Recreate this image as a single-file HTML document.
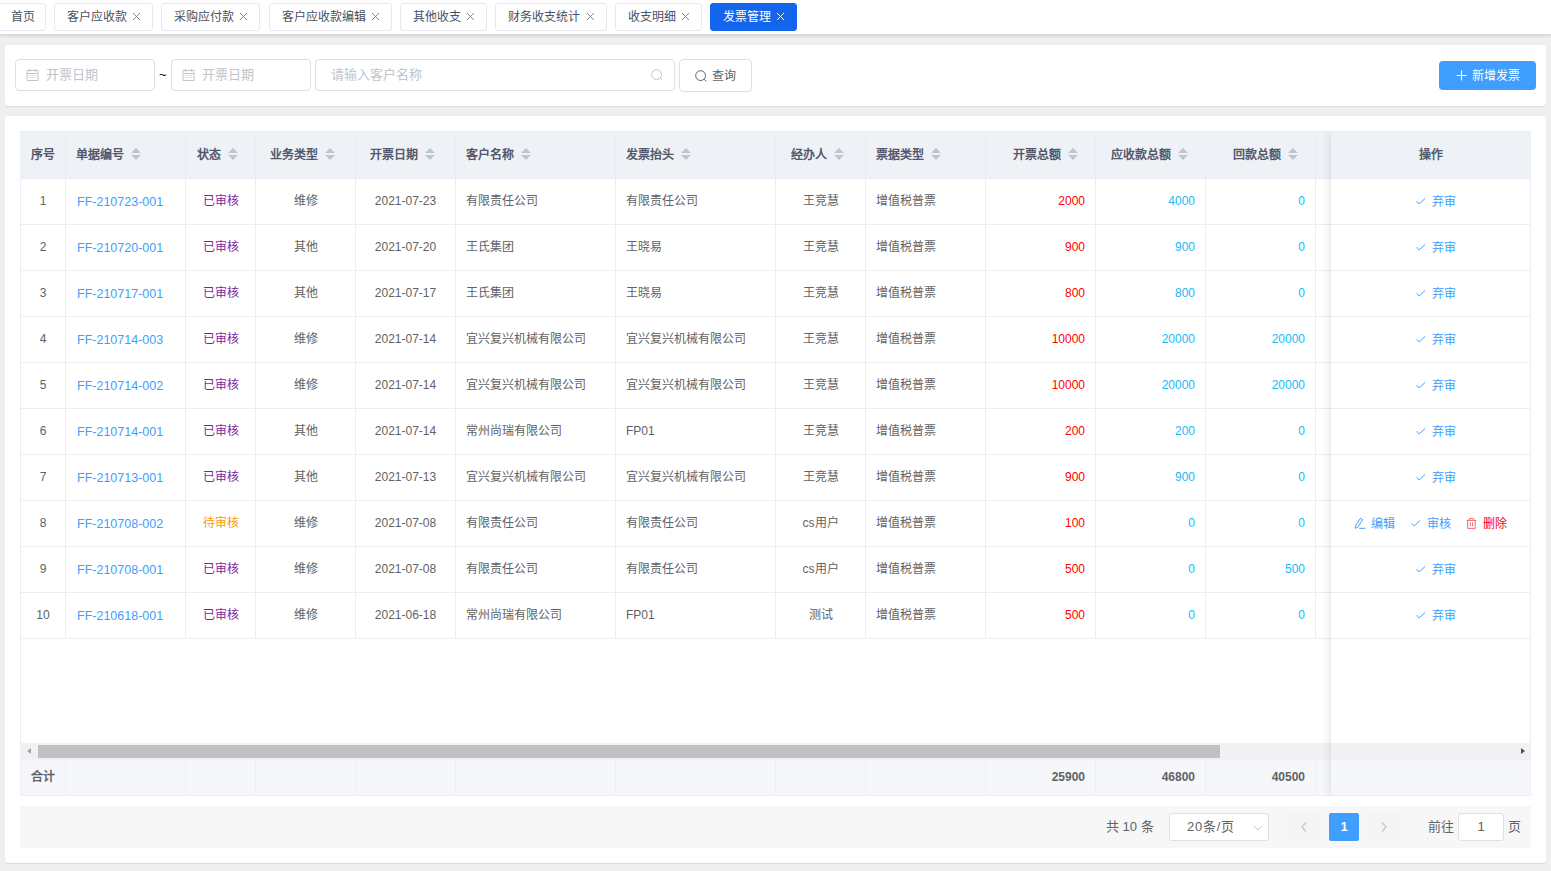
<!DOCTYPE html>
<html lang="zh-CN">
<head>
<meta charset="utf-8">
<title>发票管理</title>
<style>
*{box-sizing:border-box;margin:0;padding:0}
html,body{width:1551px;height:871px;overflow:hidden}
body{background:#efefef;font-family:"Liberation Sans",sans-serif;font-size:12px;color:#606266;position:relative}
svg{display:block}
/* ---------- tags bar ---------- */
#tags{position:absolute;left:0;top:0;width:1551px;height:35px;background:#fff;border-bottom:1px solid #d8dce5;box-shadow:0 1px 3px 0 rgba(0,0,0,.12),0 0 3px 0 rgba(0,0,0,.04)}
.tag{position:absolute;top:3px;height:28px;border:1px solid #e6e8ec;border-radius:3px;background:#fff;color:#495060;font-size:12px;line-height:26px;white-space:nowrap;padding-left:12px}
.tag .x{position:absolute;right:11px;top:8px;width:9px;height:9px}
.tag .x svg{width:9px;height:9px;stroke:#6e7488;stroke-width:.85;fill:none}
.tag.on{background:#1366ec;border-color:#1366ec;color:#fff}
.tag.on .x svg{stroke:#fff;stroke-width:1}
/* ---------- cards ---------- */
.card{position:absolute;left:5px;width:1541px;background:#fff;border-radius:3px;box-shadow:0 1px 0 #dcdcdc}
#c1{top:45px;height:61px}
#c2{top:116px;height:747px}
.inp{position:absolute;top:14px;height:32px;border:1px solid #dcdfe6;border-radius:4px;background:#fff;color:#c0c4cc;font-size:13px;line-height:30px}
.btn{position:absolute;border-radius:4px;font-size:12px;white-space:nowrap}
.cal{position:absolute;left:10px;top:9px;width:13px;height:12px;stroke:#c0c4cc;stroke-width:1;fill:none}
.cal .dt{stroke:#d3d6dc}
.sch{position:absolute;width:12px;height:12px;stroke-width:1;fill:none}
/* ---------- table ---------- */
#tb{position:absolute;left:15px;top:15px;width:1511px;height:665px;overflow:hidden;border-left:1px solid #ebeef5;background:#fff;font-size:12px;color:#606266}
.hr{display:flex;height:48px;background:#eef1f6;border-top:1px solid #e9ecf4;border-bottom:1px solid #ebeef5;width:1600px}
.hc{flex:none;height:46px;line-height:46px;padding:0 10px;border-right:1px solid #e9ecf3;font-weight:bold;color:#53586a;white-space:nowrap;overflow:hidden}
.hc span{display:inline-block;vertical-align:middle;line-height:23px;position:relative;top:0;white-space:nowrap;overflow:hidden;text-align:left}
.sc{display:inline-block;position:relative;top:-1px;width:24px;height:34px;vertical-align:middle}
.sc b{position:absolute;left:7px;width:0;height:0;border:5px solid transparent}
.sc .u{top:5px;border-bottom-color:#c0c4cc}
.sc .d{bottom:7px;border-top-color:#c0c4cc}
.c{text-align:center}.l{text-align:left}.r{text-align:right}
.tr{display:flex;height:46px;border-bottom:1px solid #ebeef5;width:1600px}
.td{flex:none;height:45px;line-height:45px;padding:0 10px;border-right:1px solid #ebeef5;white-space:nowrap;overflow:hidden}
.lk{color:#409eff;font-size:12.5px;padding-left:11px;line-height:46px}
.st{color:#7b1fa2}.sw{color:#f59e0b}
.rd{color:#ff0000}.cy{color:#14bcf3}
.fr{position:absolute;left:0;top:628px;border-top:1px solid #ebeef5;display:flex;height:37px;width:1600px;background:#f5f7fa;border-bottom:1px solid #ebeef5}
.fd{flex:none;height:35px;line-height:34px;padding:0 10px;border-right:1px solid #ebeef5;font-weight:bold;color:#606266;white-space:nowrap}
#sb{position:absolute;left:0;top:612px;width:1510px;height:17px;background:#f1f1f1}
#sb .la{position:absolute;left:5.8px;top:4.8px;width:0;height:0;border:3.7px solid transparent;border-left-width:0;border-right:4.3px solid #a3a3a3}
#sb .th{position:absolute;left:17px;top:2px;width:1182px;height:13px;background:#c1c1c1}
#fx{position:absolute;left:1310px;top:0;width:200px;height:665px;background:#fff;box-shadow:0 0 10px rgba(0,0,0,.12);border-right:1px solid #ebeef5}
.fh{height:48px;line-height:46px;background:#eef1f6;border-top:1px solid #e9ecf4;border-bottom:1px solid #ebeef5;text-align:center;font-weight:bold;color:#515a6e}
.fa{position:relative;height:46px;border-bottom:1px solid #ebeef5;color:#409eff}
.ab{position:absolute;top:0;line-height:47px;padding-left:17px;white-space:nowrap}
.ic{position:absolute;left:0;top:17px;width:12px;height:12px;fill:none;stroke:currentColor;stroke-width:1}
.ic.up{top:16px}
.del{color:#f56c6c}.del em{font-style:normal;color:#ff0000}
.fsb{position:absolute;left:0;top:612px;width:199px;height:17px;background:#f1f1f1}
.fsb .ra{position:absolute;left:190px;top:5.2px;width:0;height:0;border:3.7px solid transparent;border-right-width:0;border-left:4.3px solid #505050}
.ff{position:absolute;left:0;top:628px;width:199px;height:37px;background:#f5f7fa;border-top:1px solid #ebeef5;border-bottom:1px solid #ebeef5}
/* ---------- pagination ---------- */
#pg{position:absolute;left:15px;top:690px;width:1511px;height:42px;background:#f7f7f7;font-size:13px;color:#606266}
.pt{position:absolute;top:7px;line-height:28px;white-space:nowrap}
.psel{position:absolute;top:7px;height:28px;line-height:26px;border:1px solid #dcdfe6;border-radius:3px;background:#fff;color:#606266}
.pb{position:absolute;top:7px;width:30px;height:28px;line-height:28px;border-radius:2px;background:#f4f4f5;text-align:center;font-weight:bold;color:#606266}
.pb svg{position:absolute;left:11px;top:8px;width:8px;height:12px;fill:none;stroke:#c0c4cc;stroke-width:1.2}
.pb.on{background:#409eff;color:#fff}
</style>
</head>
<body>
<div id="tags">
  <div class="tag" style="left:-6px;width:52px;padding-left:16px">首页</div>
  <div class="tag" style="left:54px;width:99px">客户应收款<span class="x"><svg viewBox="0 0 9 9"><path d="M1 1L8 8M8 1L1 8"/></svg></span></div>
  <div class="tag" style="left:161px;width:99px">采购应付款<span class="x"><svg viewBox="0 0 9 9"><path d="M1 1L8 8M8 1L1 8"/></svg></span></div>
  <div class="tag" style="left:269px;width:123px">客户应收款编辑<span class="x"><svg viewBox="0 0 9 9"><path d="M1 1L8 8M8 1L1 8"/></svg></span></div>
  <div class="tag" style="left:400px;width:87px">其他收支<span class="x"><svg viewBox="0 0 9 9"><path d="M1 1L8 8M8 1L1 8"/></svg></span></div>
  <div class="tag" style="left:495px;width:112px">财务收支统计<span class="x"><svg viewBox="0 0 9 9"><path d="M1 1L8 8M8 1L1 8"/></svg></span></div>
  <div class="tag" style="left:615px;width:87px">收支明细<span class="x"><svg viewBox="0 0 9 9"><path d="M1 1L8 8M8 1L1 8"/></svg></span></div>
  <div class="tag on" style="left:710px;width:87px">发票管理<span class="x"><svg viewBox="0 0 9 9"><path d="M1 1L8 8M8 1L1 8"/></svg></span></div>
</div>

<div class="card" id="c1">
  <div class="inp" style="left:10px;width:140px">
    <svg class="cal" viewBox="0 0 13 12"><path d="M1 1.5h11v10H1zM1 4.5h11M3.5 0v2.5M9.5 0v2.5"/><path class="dt" d="M3.2 6.5h1.6M5.7 6.5h1.6M8.2 6.5h1.6M3.2 8.5h1.6M5.7 8.5h1.6M8.2 8.5h1.6"/></svg>
    <span style="position:absolute;left:30px;top:0">开票日期</span>
  </div>
  <div style="position:absolute;left:154px;top:22px;font-size:13px;color:#000;line-height:16px">~</div>
  <div class="inp" style="left:166px;width:140px">
    <svg class="cal" viewBox="0 0 13 12"><path d="M1 1.5h11v10H1zM1 4.5h11M3.5 0v2.5M9.5 0v2.5"/><path class="dt" d="M3.2 6.5h1.6M5.7 6.5h1.6M8.2 6.5h1.6M3.2 8.5h1.6M5.7 8.5h1.6M8.2 8.5h1.6"/></svg>
    <span style="position:absolute;left:30px;top:0">开票日期</span>
  </div>
  <div class="inp" style="left:310px;width:360px">
    <span style="position:absolute;left:15px;top:0">请输入客户名称</span>
    <svg class="sch" style="left:335px;top:9px;stroke:#c0c4cc" viewBox="0 0 12 12"><circle cx="5.6" cy="5.6" r="4.9"/><path d="M9.3 9.3L11.3 11.3"/></svg>
  </div>
  <div class="btn" style="left:674px;top:14px;width:73px;height:33px;border:1px solid #dcdfe6;background:#fff;color:#606266;line-height:31px">
    <svg class="sch" style="left:15px;top:10px;stroke:#606266" viewBox="0 0 12 12"><circle cx="5.6" cy="5.6" r="4.9"/><path d="M9.3 9.3L11.3 11.3"/></svg>
    <span style="position:absolute;left:32px;top:1px">查询</span>
  </div>
  <div class="btn" style="left:1434px;top:16px;width:97px;height:29px;background:#409eff;color:#fff;line-height:29px">
    <svg style="position:absolute;left:17px;top:9px;width:11px;height:11px;stroke:#fff;stroke-width:1.1;fill:none" viewBox="0 0 11 11"><path d="M5.5 0.5V10.5M0.5 5.5H10.5"/></svg>
    <span style="position:absolute;left:33px;top:1px">新增发票</span>
  </div>
</div>
<div class="card" id="c2">
<!--TB-->
<div id="tb">
<div class="hr">
<div class="hc c" style="width:45px"><span style="width:24px">序号</span></div>
<div class="hc l" style="width:120px"><span style="width:48px">单据编号</span><i class="sc"><b class="u"></b><b class="d"></b></i></div>
<div class="hc c" style="width:70px"><span style="width:24px">状态</span><i class="sc"><b class="u"></b><b class="d"></b></i></div>
<div class="hc c" style="width:100px"><span style="width:48px">业务类型</span><i class="sc"><b class="u"></b><b class="d"></b></i></div>
<div class="hc c" style="width:100px"><span style="width:48px">开票日期</span><i class="sc"><b class="u"></b><b class="d"></b></i></div>
<div class="hc l" style="width:160px"><span style="width:48px">客户名称</span><i class="sc"><b class="u"></b><b class="d"></b></i></div>
<div class="hc l" style="width:160px"><span style="width:48px">发票抬头</span><i class="sc"><b class="u"></b><b class="d"></b></i></div>
<div class="hc c" style="width:90px"><span style="width:36px">经办人</span><i class="sc"><b class="u"></b><b class="d"></b></i></div>
<div class="hc l" style="width:120px"><span style="width:48px">票据类型</span><i class="sc"><b class="u"></b><b class="d"></b></i></div>
<div class="hc r" style="width:110px"><span style="width:48px">开票总额</span><i class="sc"><b class="u"></b><b class="d"></b></i></div>
<div class="hc r" style="width:110px"><span style="width:60px">应收款总额</span><i class="sc"><b class="u"></b><b class="d"></b></i></div>
<div class="hc r" style="width:110px"><span style="width:48px">回款总额</span><i class="sc"><b class="u"></b><b class="d"></b></i></div>
<div class="hc l" style="width:16px"><span style="width:0px"></span></div>
</div>
<div class="tr">
<div class="td c" style="width:45px">1</div>
<div class="td l lk" style="width:120px">FF-210723-001</div>
<div class="td c st" style="width:70px">已审核</div>
<div class="td c" style="width:100px">维修</div>
<div class="td c" style="width:100px">2021-07-23</div>
<div class="td l" style="width:160px">有限责任公司</div>
<div class="td l" style="width:160px">有限责任公司</div>
<div class="td c" style="width:90px">王竞慧</div>
<div class="td l" style="width:120px">增值税普票</div>
<div class="td r rd" style="width:110px">2000</div>
<div class="td r cy" style="width:110px">4000</div>
<div class="td r cy" style="width:110px">0</div>
<div class="td l" style="width:16px"></div>
</div>
<div class="tr">
<div class="td c" style="width:45px">2</div>
<div class="td l lk" style="width:120px">FF-210720-001</div>
<div class="td c st" style="width:70px">已审核</div>
<div class="td c" style="width:100px">其他</div>
<div class="td c" style="width:100px">2021-07-20</div>
<div class="td l" style="width:160px">王氏集团</div>
<div class="td l" style="width:160px">王晓易</div>
<div class="td c" style="width:90px">王竞慧</div>
<div class="td l" style="width:120px">增值税普票</div>
<div class="td r rd" style="width:110px">900</div>
<div class="td r cy" style="width:110px">900</div>
<div class="td r cy" style="width:110px">0</div>
<div class="td l" style="width:16px"></div>
</div>
<div class="tr">
<div class="td c" style="width:45px">3</div>
<div class="td l lk" style="width:120px">FF-210717-001</div>
<div class="td c st" style="width:70px">已审核</div>
<div class="td c" style="width:100px">其他</div>
<div class="td c" style="width:100px">2021-07-17</div>
<div class="td l" style="width:160px">王氏集团</div>
<div class="td l" style="width:160px">王晓易</div>
<div class="td c" style="width:90px">王竞慧</div>
<div class="td l" style="width:120px">增值税普票</div>
<div class="td r rd" style="width:110px">800</div>
<div class="td r cy" style="width:110px">800</div>
<div class="td r cy" style="width:110px">0</div>
<div class="td l" style="width:16px"></div>
</div>
<div class="tr">
<div class="td c" style="width:45px">4</div>
<div class="td l lk" style="width:120px">FF-210714-003</div>
<div class="td c st" style="width:70px">已审核</div>
<div class="td c" style="width:100px">维修</div>
<div class="td c" style="width:100px">2021-07-14</div>
<div class="td l" style="width:160px">宜兴复兴机械有限公司</div>
<div class="td l" style="width:160px">宜兴复兴机械有限公司</div>
<div class="td c" style="width:90px">王竞慧</div>
<div class="td l" style="width:120px">增值税普票</div>
<div class="td r rd" style="width:110px">10000</div>
<div class="td r cy" style="width:110px">20000</div>
<div class="td r cy" style="width:110px">20000</div>
<div class="td l" style="width:16px"></div>
</div>
<div class="tr">
<div class="td c" style="width:45px">5</div>
<div class="td l lk" style="width:120px">FF-210714-002</div>
<div class="td c st" style="width:70px">已审核</div>
<div class="td c" style="width:100px">维修</div>
<div class="td c" style="width:100px">2021-07-14</div>
<div class="td l" style="width:160px">宜兴复兴机械有限公司</div>
<div class="td l" style="width:160px">宜兴复兴机械有限公司</div>
<div class="td c" style="width:90px">王竞慧</div>
<div class="td l" style="width:120px">增值税普票</div>
<div class="td r rd" style="width:110px">10000</div>
<div class="td r cy" style="width:110px">20000</div>
<div class="td r cy" style="width:110px">20000</div>
<div class="td l" style="width:16px"></div>
</div>
<div class="tr">
<div class="td c" style="width:45px">6</div>
<div class="td l lk" style="width:120px">FF-210714-001</div>
<div class="td c st" style="width:70px">已审核</div>
<div class="td c" style="width:100px">其他</div>
<div class="td c" style="width:100px">2021-07-14</div>
<div class="td l" style="width:160px">常州尚瑞有限公司</div>
<div class="td l" style="width:160px">FP01</div>
<div class="td c" style="width:90px">王竞慧</div>
<div class="td l" style="width:120px">增值税普票</div>
<div class="td r rd" style="width:110px">200</div>
<div class="td r cy" style="width:110px">200</div>
<div class="td r cy" style="width:110px">0</div>
<div class="td l" style="width:16px"></div>
</div>
<div class="tr">
<div class="td c" style="width:45px">7</div>
<div class="td l lk" style="width:120px">FF-210713-001</div>
<div class="td c st" style="width:70px">已审核</div>
<div class="td c" style="width:100px">其他</div>
<div class="td c" style="width:100px">2021-07-13</div>
<div class="td l" style="width:160px">宜兴复兴机械有限公司</div>
<div class="td l" style="width:160px">宜兴复兴机械有限公司</div>
<div class="td c" style="width:90px">王竞慧</div>
<div class="td l" style="width:120px">增值税普票</div>
<div class="td r rd" style="width:110px">900</div>
<div class="td r cy" style="width:110px">900</div>
<div class="td r cy" style="width:110px">0</div>
<div class="td l" style="width:16px"></div>
</div>
<div class="tr">
<div class="td c" style="width:45px">8</div>
<div class="td l lk" style="width:120px">FF-210708-002</div>
<div class="td c sw" style="width:70px">待审核</div>
<div class="td c" style="width:100px">维修</div>
<div class="td c" style="width:100px">2021-07-08</div>
<div class="td l" style="width:160px">有限责任公司</div>
<div class="td l" style="width:160px">有限责任公司</div>
<div class="td c" style="width:90px">cs用户</div>
<div class="td l" style="width:120px">增值税普票</div>
<div class="td r rd" style="width:110px">100</div>
<div class="td r cy" style="width:110px">0</div>
<div class="td r cy" style="width:110px">0</div>
<div class="td l" style="width:16px"></div>
</div>
<div class="tr">
<div class="td c" style="width:45px">9</div>
<div class="td l lk" style="width:120px">FF-210708-001</div>
<div class="td c st" style="width:70px">已审核</div>
<div class="td c" style="width:100px">维修</div>
<div class="td c" style="width:100px">2021-07-08</div>
<div class="td l" style="width:160px">有限责任公司</div>
<div class="td l" style="width:160px">有限责任公司</div>
<div class="td c" style="width:90px">cs用户</div>
<div class="td l" style="width:120px">增值税普票</div>
<div class="td r rd" style="width:110px">500</div>
<div class="td r cy" style="width:110px">0</div>
<div class="td r cy" style="width:110px">500</div>
<div class="td l" style="width:16px"></div>
</div>
<div class="tr">
<div class="td c" style="width:45px">10</div>
<div class="td l lk" style="width:120px">FF-210618-001</div>
<div class="td c st" style="width:70px">已审核</div>
<div class="td c" style="width:100px">维修</div>
<div class="td c" style="width:100px">2021-06-18</div>
<div class="td l" style="width:160px">常州尚瑞有限公司</div>
<div class="td l" style="width:160px">FP01</div>
<div class="td c" style="width:90px">测试</div>
<div class="td l" style="width:120px">增值税普票</div>
<div class="td r rd" style="width:110px">500</div>
<div class="td r cy" style="width:110px">0</div>
<div class="td r cy" style="width:110px">0</div>
<div class="td l" style="width:16px"></div>
</div>
<div class="fr">
<div class="fd c" style="width:45px">合计</div>
<div class="fd l" style="width:120px"></div>
<div class="fd c" style="width:70px"></div>
<div class="fd c" style="width:100px"></div>
<div class="fd c" style="width:100px"></div>
<div class="fd l" style="width:160px"></div>
<div class="fd l" style="width:160px"></div>
<div class="fd c" style="width:90px"></div>
<div class="fd l" style="width:120px"></div>
<div class="fd r" style="width:110px">25900</div>
<div class="fd r" style="width:110px">46800</div>
<div class="fd r" style="width:110px">40500</div>
<div class="fd l" style="width:16px"></div>
</div>
<div id="sb"><i class="la"></i><i class="th"></i></div>
<div id="fx">
<div class="fh">操作</div>
<div class="fa"><span class="ab" style="left:83.5px"><svg class="ic" viewBox="0 0 12 12"><path d="M1.7 5.3L4.2 8L10.1 2.4"/></svg>弃审</span></div>
<div class="fa"><span class="ab" style="left:83.5px"><svg class="ic" viewBox="0 0 12 12"><path d="M1.7 5.3L4.2 8L10.1 2.4"/></svg>弃审</span></div>
<div class="fa"><span class="ab" style="left:83.5px"><svg class="ic" viewBox="0 0 12 12"><path d="M1.7 5.3L4.2 8L10.1 2.4"/></svg>弃审</span></div>
<div class="fa"><span class="ab" style="left:83.5px"><svg class="ic" viewBox="0 0 12 12"><path d="M1.7 5.3L4.2 8L10.1 2.4"/></svg>弃审</span></div>
<div class="fa"><span class="ab" style="left:83.5px"><svg class="ic" viewBox="0 0 12 12"><path d="M1.7 5.3L4.2 8L10.1 2.4"/></svg>弃审</span></div>
<div class="fa"><span class="ab" style="left:83.5px"><svg class="ic" viewBox="0 0 12 12"><path d="M1.7 5.3L4.2 8L10.1 2.4"/></svg>弃审</span></div>
<div class="fa"><span class="ab" style="left:83.5px"><svg class="ic" viewBox="0 0 12 12"><path d="M1.7 5.3L4.2 8L10.1 2.4"/></svg>弃审</span></div>
<div class="fa"><span class="ab" style="left:23px"><svg class="ic up" viewBox="0 0 12 12"><path d="M6.4 1.3L8.7 2.7L3.7 10.5L1.3 11.2L1.5 9zM5.2 11.3H11.3"/></svg>编辑</span><span class="ab" style="left:79.3px"><svg class="ic" viewBox="0 0 12 12"><path d="M1.7 5.3L4.2 8L10.1 2.4"/></svg>审核</span><span class="ab del" style="left:135px"><svg class="ic up" viewBox="0 0 12 12"><path d="M0.6 3.4h9.6M3.2 3.4V1.6h4.4V3.4M1.6 3.4v8h7.6v-8M4.3 5.4v3.8M6.5 5.4v3.8"/></svg><em>删除</em></span></div>
<div class="fa"><span class="ab" style="left:83.5px"><svg class="ic" viewBox="0 0 12 12"><path d="M1.7 5.3L4.2 8L10.1 2.4"/></svg>弃审</span></div>
<div class="fa"><span class="ab" style="left:83.5px"><svg class="ic" viewBox="0 0 12 12"><path d="M1.7 5.3L4.2 8L10.1 2.4"/></svg>弃审</span></div>
<div class="fsb"><i class="ra"></i></div>
<div class="ff"></div>
</div>
</div>
<!--/TB-->
<!--PG-->
<div id="pg">
  <span class="pt" style="left:1086px">共 10 条</span>
  <div class="psel" style="left:1149px;width:100px"><span style="position:absolute;left:17px;top:0;letter-spacing:.8px">20条/页</span>
    <svg style="position:absolute;left:83px;top:10px;width:10px;height:8px;fill:none;stroke:#c0c4cc;stroke-width:1" viewBox="0 0 10 8"><path d="M1 2L5 6L9 2"/></svg></div>
  <div class="pb" style="left:1269px"><svg viewBox="0 0 8 12"><path d="M6 1.5L1.8 6L6 10.5"/></svg></div>
  <div class="pb on" style="left:1309px">1</div>
  <div class="pb" style="left:1349px"><svg viewBox="0 0 8 12"><path d="M2 1.5L6.2 6L2 10.5"/></svg></div>
  <span class="pt" style="left:1408px">前往</span>
  <div class="psel" style="left:1438px;width:46px;text-align:center">1</div>
  <span class="pt" style="left:1488px">页</span>
</div>
<!--/PG-->
</div>
</body>
</html>
